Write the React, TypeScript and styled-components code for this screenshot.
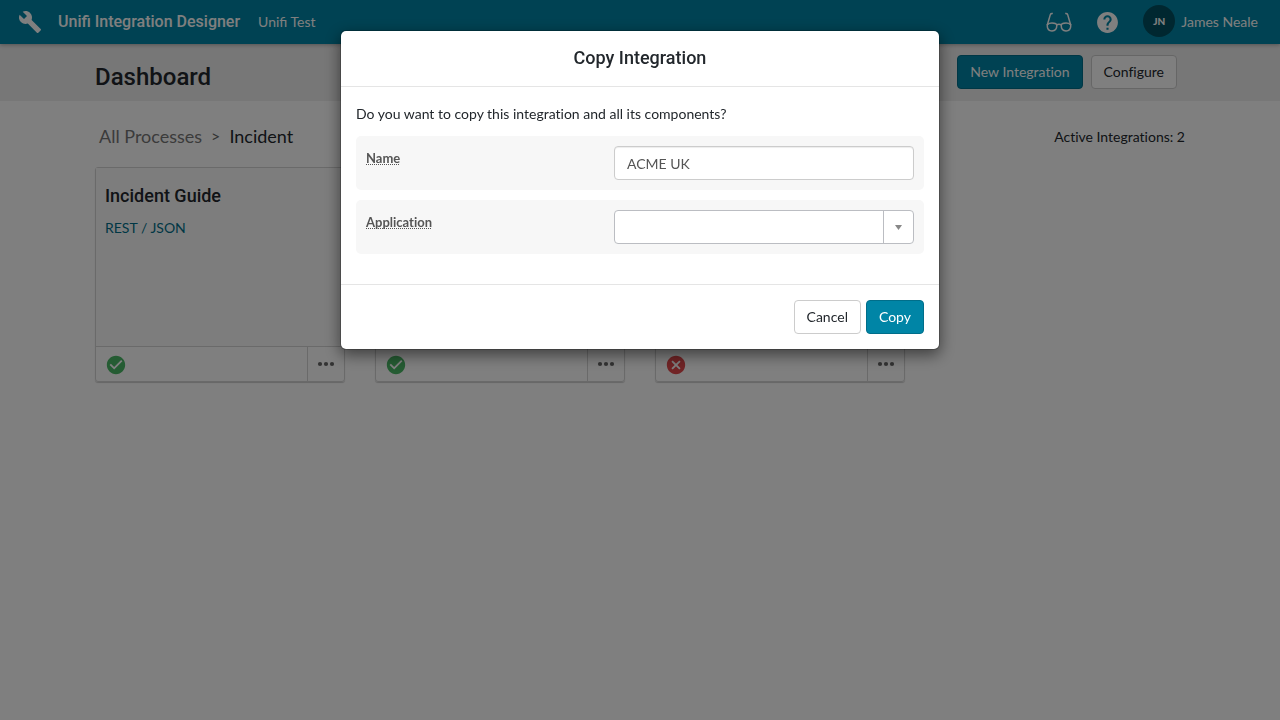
import React from "react";
import styled, { createGlobalStyle, css } from "styled-components";
import { MdBuild, MdCancel, MdCheckCircle, MdHelp } from "react-icons/md";

const teal = "#0085a6";
const tealDark = "#006e8a";
const heading = '"Roboto", "Liberation Sans", sans-serif';

const GlobalStyle = createGlobalStyle`
  *, *::before, *::after { box-sizing: border-box; }
  body {
    margin: 0;
    background: #fff;
    color: #22272c;
    font: 14px/20px "Lato", "Liberation Sans", sans-serif;
    font-variant-ligatures: no-common-ligatures;
  }
  h1, h2, p { margin: 0; }
  button, input, select { font: inherit; font-variant-ligatures: inherit; }
`;

const Page = styled.div`
  min-height: 100vh;
`;

const TopBar = styled.header`
  position: relative;
  display: flex;
  align-items: center;
  height: 44px;
  padding: 0 22px 0 18px;
  background: ${teal};
  color: #fff;
  font-variant-ligatures: common-ligatures;
  box-shadow: 0 1px 4px rgba(0, 0, 0, 0.3);
`;

const Brand = styled.a`
  display: flex;
  align-items: center;
  gap: 16px;
  color: inherit;
  text-decoration: none;
  font: 500 16px/20px ${heading};
`;

const Workspace = styled.a`
  margin-left: 18px;
  color: inherit;
  text-decoration: none;
`;

const Tools = styled.nav`
  display: flex;
  align-items: center;
  margin-left: auto;
`;

const ToolButton = styled.button`
  display: flex;
  align-items: center;
  justify-content: center;
  width: 48px;
  height: 44px;
  padding: 0;
  border: 0;
  background: none;
  color: inherit;
`;

const UserButton = styled.button`
  display: flex;
  align-items: center;
  gap: 6px;
  height: 44px;
  margin-left: 12px;
  padding: 0;
  border: 0;
  background: none;
  color: inherit;
`;

const Avatar = styled.span`
  width: 32px;
  height: 32px;
  margin-bottom: 2px;
  border-radius: 50%;
  background: #004f61;
  font-size: 10px;
  font-weight: 900;
  line-height: 32px;
`;

const SubHeader = styled.div`
  display: flex;
  align-items: center;
  justify-content: space-between;
  height: 57px;
  padding: 0 103px 1px 95px;
  background: #eee;
`;

const PageTitle = styled.h1`
  padding-top: 10px;
  font: 500 24px/30px ${heading};
`;

const ButtonRow = styled.div<{ $gap: number }>`
  display: flex;
  justify-content: flex-end;
  gap: ${(p) => p.$gap}px;
`;

const Button = styled.button<{ $primary?: boolean }>`
  height: 34px;
  padding: 0 12px;
  border: 1px solid #ccc;
  border-radius: 4px;
  background: #fff;
  color: #22272c;
  ${(p) =>
    p.$primary &&
    css`
      border-color: ${tealDark};
      background: ${teal};
      color: #fff;
    `}
`;

const Content = styled.main`
  padding: 24px 95px;
`;

const Summary = styled.div`
  display: flex;
  align-items: center;
  justify-content: space-between;
  padding-left: 4px;
`;

const Breadcrumb = styled.nav`
  display: flex;
  gap: 9px;
  padding-bottom: 2px;
  font-size: 18px;
  line-height: 22px;
`;

const Crumb = styled.a`
  color: #777;
  text-decoration: none;
`;

const Separator = styled.span`
  color: #666;
  font-size: 16px;
`;

const Cards = styled.div`
  display: flex;
  flex-wrap: wrap;
  gap: 30px;
  margin-top: 18px;
`;

const Card = styled.article`
  display: flex;
  flex-direction: column;
  width: 250px;
  border: 1px solid #d4d4d4;
  border-radius: 3px;
  box-shadow: 0 1px 1px rgba(0, 0, 0, 0.2);
`;

const CardBody = styled.div`
  min-height: 178px;
  padding: 17px 9px;
  background: #fbfbfb;
`;

const CardTitle = styled.h2`
  font: 500 18px/22px ${heading};
`;

const CardType = styled.p`
  margin-top: 11px;
  color: #006e8a;
`;

const CardFooter = styled.div`
  display: flex;
  height: 35px;
  border-top: 1px solid #d4d4d4;
`;

const Status = styled.div<{ $ok: boolean }>`
  display: flex;
  flex: 1;
  align-items: center;
  padding: 1px 0 0 9px;
  color: ${(p) => (p.$ok ? "#4ab866" : "#e2494c")};
`;

const MoreButton = styled.button`
  display: flex;
  align-items: center;
  justify-content: center;
  width: 37px;
  padding: 0;
  border: 0;
  border-left: 1px solid #d4d4d4;
  background: none;
  color: #666;
`;

const Backdrop = styled.div`
  position: fixed;
  inset: 0;
  display: flex;
  align-items: flex-start;
  justify-content: center;
  padding: 30px 20px;
  background: rgba(0, 0, 0, 0.5);
`;

const Dialog = styled.form`
  width: 100%;
  max-width: 600px;
  border: 1px solid rgba(0, 0, 0, 0.2);
  border-radius: 6px;
  background: #fff;
  background-clip: padding-box;
  box-shadow: 0 5px 15px rgba(0, 0, 0, 0.5);
`;

const DialogTitle = styled.h2`
  padding: 15px 15px 16px;
  border-bottom: 1px solid #e5e5e5;
  text-align: center;
  font: 500 18px/24px ${heading};
`;

const DialogBody = styled.div`
  display: flex;
  flex-direction: column;
  gap: 10px;
  padding: 15px 15px 30px;
`;

const Question = styled.p`
  line-height: 24px;
`;

const Field = styled.div`
  display: flex;
  justify-content: space-between;
  padding: 10px;
  border-radius: 5px;
  background: #f7f7f7;
`;

const Label = styled.label`
  color: #555;
  font-size: 13px;
  font-weight: 700;
  line-height: 24px;
  text-decoration: underline dotted 1px;
  text-decoration-skip-ink: none;
`;

const control = css`
  width: 300px;
  height: 34px;
  padding: 0 12px;
  border: 1px solid #ccc;
  border-radius: 4px;
  background: #fff;
  color: #555;
`;

const TextInput = styled.input`
  ${control}
  box-shadow: inset 0 1px 1px rgba(0, 0, 0, 0.075);
`;

const SelectWrap = styled.div`
  position: relative;
`;

const Select = styled.select`
  ${control}
  display: block;
  appearance: none;
  border-color: #bbbdc2;
`;

const SelectArrow = styled.span`
  position: absolute;
  top: 1px;
  right: 1px;
  bottom: 1px;
  display: flex;
  align-items: center;
  justify-content: center;
  width: 30px;
  border-left: 1px solid #bbbdc2;
  pointer-events: none;
`;

const DialogFooter = styled.div`
  padding: 15px;
  border-top: 1px solid #e5e5e5;
`;

const Glasses = () => (
  <svg width="26" height="20" viewBox="0 0 26 20" fill="none" stroke="currentColor" strokeWidth="1.5" strokeLinejoin="round">
    <path d="M1.3 12.6Q3 11 6 11Q10.8 11 10.8 13.6Q10.8 18.9 6 18.9Q1.3 18.9 1.3 14Z" />
    <path d="M24.7 12.6Q23 11 20 11Q15.2 11 15.2 13.6Q15.2 18.9 20 18.9Q24.7 18.9 24.7 14Z" />
    <path d="M10.6 12.8Q13 11.8 15.4 12.8M1.3 13L4.4 2.4Q4.8 1.2 6.8 1.5M24.7 13L21.6 2.4Q21.2 1.2 19.2 1.5" />
  </svg>
);

const Dots = () => (
  <svg width="18" height="6" viewBox="0 0 18 6" fill="currentColor">
    <circle cx="3" cy="3" r="2.1" />
    <circle cx="9" cy="3" r="2.1" />
    <circle cx="15" cy="3" r="2.1" />
  </svg>
);

const integrations = [
  { title: "Incident Guide", type: "REST / JSON", ok: true },
  { title: "", type: "", ok: true },
  { title: "", type: "", ok: false },
];

export default function App() {
  return (
    <Page>
      <GlobalStyle />
      <TopBar>
        <Brand href="#">
          <MdBuild size={24} />
          Unifi Integration Designer
        </Brand>
        <Workspace href="#">Unifi Test</Workspace>
        <Tools>
          <ToolButton aria-label="Preview">
            <Glasses />
          </ToolButton>
          <ToolButton aria-label="Help">
            <MdHelp size={25} />
          </ToolButton>
          <UserButton>
            <Avatar>JN</Avatar>
            James Neale
          </UserButton>
        </Tools>
      </TopBar>
      <SubHeader>
        <PageTitle>Dashboard</PageTitle>
        <ButtonRow $gap={8}>
          <Button $primary>New Integration</Button>
          <Button>Configure</Button>
        </ButtonRow>
      </SubHeader>
      <Content>
        <Summary>
          <Breadcrumb>
            <Crumb href="#">All Processes</Crumb>
            <Separator>&gt;</Separator>
            <span>Incident</span>
          </Breadcrumb>
          <span>Active Integrations: 2</span>
        </Summary>
        <Cards>
          {integrations.map((item, i) => (
            <Card key={i}>
              <CardBody>
                {item.title && <CardTitle>{item.title}</CardTitle>}
                {item.type && <CardType>{item.type}</CardType>}
              </CardBody>
              <CardFooter>
                <Status $ok={item.ok}>
                  {item.ok ? <MdCheckCircle size={22} /> : <MdCancel size={22} />}
                </Status>
                <MoreButton aria-label="More actions">
                  <Dots />
                </MoreButton>
              </CardFooter>
            </Card>
          ))}
        </Cards>
      </Content>
      <Backdrop>
        <Dialog role="dialog" aria-modal="true" aria-labelledby="copy-title">
          <DialogTitle id="copy-title">Copy Integration</DialogTitle>
          <DialogBody>
            <Question>Do you want to copy this integration and all its components?</Question>
            <Field>
              <Label htmlFor="name">Name</Label>
              <TextInput id="name" defaultValue="ACME UK" />
            </Field>
            <Field>
              <Label htmlFor="application">Application</Label>
              <SelectWrap>
                <Select id="application" defaultValue="">
                  <option value="" />
                </Select>
                <SelectArrow>
                  <svg width="7" height="5" viewBox="0 0 7 5" fill="#888">
                    <path d="M0 0H7L3.5 5Z" />
                  </svg>
                </SelectArrow>
              </SelectWrap>
            </Field>
          </DialogBody>
          <DialogFooter>
            <ButtonRow $gap={5}>
              <Button type="button">Cancel</Button>
              <Button type="button" $primary>
                Copy
              </Button>
            </ButtonRow>
          </DialogFooter>
        </Dialog>
      </Backdrop>
    </Page>
  );
}
